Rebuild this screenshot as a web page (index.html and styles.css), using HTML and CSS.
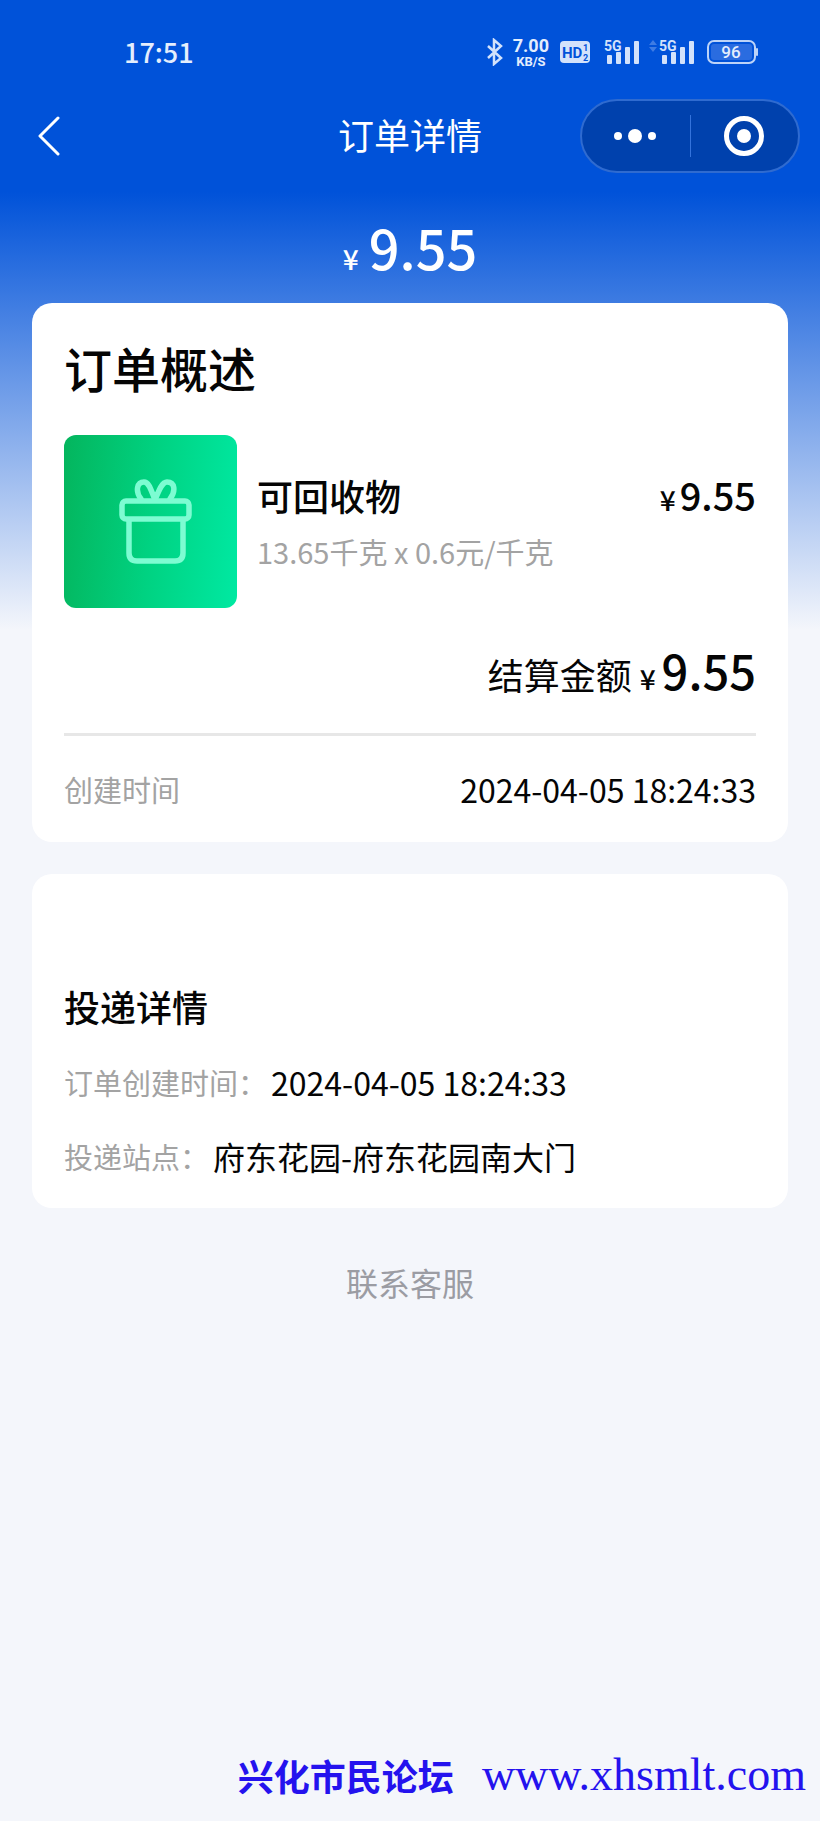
FILE: index.html
```html
<!DOCTYPE html>
<html lang="zh-CN">
<head>
<meta charset="utf-8">
<meta name="viewport" content="width=device-width">
<title>订单详情</title>
<link rel="stylesheet" href="styles.css">
</head>
<body>
<div class="page">
  <div class="status">
    <time class="clock">17:51</time>
    <div class="status-icons">
      <svg width="18" height="28" viewBox="0 0 18 28" fill="none" stroke="#d3e2fb" stroke-width="2.500"><path d="M2 8l13 12-7 6V2l7 6L2 20"/></svg>
      <div class="speed"><span class="speed-value">7.00</span><span class="speed-unit">KB/S</span></div>
      <svg class="hd" width="32" height="24" viewBox="0 0 32 24"><rect x="1" y="1" width="30" height="22" rx="4" fill="#d3e2fb"/><g fill="#0052d9" font-weight="700"><text x="3" y="18" font-size="15">HD</text><text x="24" y="11" font-size="9">1</text><text x="24" y="21" font-size="9">2</text></g></svg>
      <svg class="signal" width="36" height="28" viewBox="0 0 36 28" fill="#d3e2fb"><text x="0" y="13" font-size="14" font-weight="700">5G</text><rect x="3" y="17" width="5" height="9" rx="1"/><rect x="12" y="14" width="5" height="12" rx="1"/><rect x="21" y="9" width="5" height="17" rx="1"/><rect x="30" y="3" width="5" height="23" rx="1"/></svg>
      <svg class="signal second" width="46" height="28" viewBox="0 0 46 28" fill="#d3e2fb"><path d="M0 7l4-5 4 5zM0 9h8l-4 5z" fill="#3f7ce3"/><text x="10" y="13" font-size="14" font-weight="700">5G</text><rect x="13" y="17" width="5" height="9" rx="1"/><rect x="22" y="14" width="5" height="12" rx="1"/><rect x="31" y="9" width="5" height="17" rx="1"/><rect x="40" y="3" width="5" height="23" rx="1"/></svg>
      <svg class="battery" width="52" height="26" viewBox="0 0 52 26"><rect x="1" y="2" width="47" height="22" rx="6" fill="none" stroke="#bcd3f8" stroke-width="2"/><rect x="4" y="5" width="41" height="16" rx="3" fill="#2a6ce0"/><rect x="49" y="9" width="2" height="8" rx="1" fill="#bcd3f8"/><text x="24" y="19" font-size="17" font-weight="500" fill="#e4eefd" text-anchor="middle">96</text></svg>
    </div>
  </div>
  <header class="nav">
    <button class="back" aria-label="返回"><svg width="24" height="40" viewBox="0 0 24 40" fill="none" stroke="#fff" stroke-width="3" stroke-linecap="round" stroke-linejoin="round"><path d="M20 2L2 20l18 18"/></svg></button>
    <h1 class="nav-title">订单详情</h1>
    <div class="capsule">
      <button class="capsule-button" aria-label="更多"><svg width="44" height="16" viewBox="0 0 44 16" fill="#fff"><circle cx="4" cy="8" r="4"/><circle cx="21" cy="8" r="7"/><circle cx="38" cy="8" r="4"/></svg></button>
      <button class="capsule-button divided" aria-label="关闭"><svg width="42" height="42" viewBox="0 0 42 42"><circle cx="21" cy="21" r="17.5" fill="none" stroke="#fff" stroke-width="5"/><circle cx="21" cy="21" r="7" fill="#fff"/></svg></button>
    </div>
  </header>
  <p class="total"><span class="yen">¥</span>9.55</p>
  <main class="cards">
    <section class="card">
      <h2 class="card-title">订单概述</h2>
      <div class="item">
        <div class="thumb"><svg width="76" height="88" viewBox="0 0 76 88" fill="none" stroke="#7dfcd2" stroke-width="5.500" stroke-linejoin="round" stroke-linecap="round"><rect x="5" y="23" width="67" height="18" rx="4"/><path d="M12 42v33q0 8 8 8h38q8 0 8-8V42M24 21c-6-8-4-17 3-17 5 0 7 8 11 18 4-10 7-18 12-18 8 0 9 9 3 17"/></svg></div>
        <div class="item-text">
          <h3 class="item-name">可回收物</h3>
          <p class="item-sub">13.65千克 x 0.6元/千克</p>
        </div>
        <p class="item-price"><span class="yen">¥</span>9.55</p>
      </div>
      <p class="settle"><span class="settle-label">结算金额</span><span class="yen">¥</span>9.55</p>
      <dl class="created"><dt>创建时间</dt><dd>2024-04-05 18:24:33</dd></dl>
    </section>
    <section class="card delivery">
      <h2 class="section-title">投递详情</h2>
      <dl class="rows">
        <div class="row"><dt>订单创建时间：</dt><dd>2024-04-05 18:24:33</dd></div>
        <div class="row"><dt>投递站点：</dt><dd>府东花园-府东花园南大门</dd></div>
      </dl>
    </section>
  </main>
  <button class="contact">联系客服</button>
  <footer class="watermark"><span>兴化市民论坛</span><span class="site">www.xhsmlt.com</span></footer>
</div>
</body>
</html>
```

FILE: styles.css
```css
* { box-sizing: border-box; }
body, h1, h2, h3, p, dl, dd { margin: 0; }
body {
  font-family: "Noto Sans CJK SC", "Noto Sans", sans-serif;
  color: #050505;
  background: #f4f6fb;
}
button { padding: 0; border: 0; background: none; font: inherit; color: inherit; }
svg { display: block; flex: none; }
.page {
  display: flex;
  flex-direction: column;
  min-height: 100vh;
  background: linear-gradient(#0052d9 0, #0052d9 192px, #f4f6fb 630px);
}
.status {
  display: flex;
  justify-content: space-between;
  align-items: center;
  height: 92px;
  padding: 12px 61px 0 124px;
  color: #e4eefd;
}
.clock { font-size: 27px; font-weight: 500; line-height: 32px; }
.status-icons { display: flex; align-items: center; font-family: Roboto, sans-serif; }
.speed {
  display: flex;
  flex-direction: column;
  align-items: center;
  margin: 0 10px 0 9px;
  font-weight: 700;
}
.speed-value { font-size: 18px; line-height: 18px; }
.speed-unit { font-size: 13px; line-height: 13px; }
.signal { margin-left: 13px; }
.signal.second { margin-left: 9px; }
.battery { margin-left: 12px; }
.nav {
  display: grid;
  grid-template-columns: 1fr auto 1fr;
  align-items: center;
  height: 88px;
  padding: 0 20px 0 38px;
  color: #fff;
}
.back { justify-self: start; }
.nav-title { padding: 0 18px 4px 0; font-size: 36px; font-weight: 400; line-height: 48px; }
.capsule {
  display: flex;
  justify-self: end;
  width: 220px;
  height: 74px;
  padding: 14px 0;
  border: 2px solid #2f6bd0;
  border-radius: 37px;
  background: #0041ad;
}
.capsule-button { display: flex; flex: 1; justify-content: center; align-items: center; }
.divided { border-left: 1px solid #3473dc; }
.total {
  padding: 27px 0 5px;
  text-align: center;
  color: #fff;
  font-size: 54px;
  font-weight: 500;
  line-height: 80px;
}
.yen { margin-right: 6px; font-size: 28px; }
.total .yen { margin-right: 10px; }
.cards { display: flex; flex-direction: column; gap: 32px; padding: 0 32px; }
.card { padding: 32px; border-radius: 20px; background: #fff; }
.card-title { font-size: 48px; font-weight: 500; line-height: 64px; }
.item { display: flex; gap: 20px; margin-top: 36px; }
.thumb {
  display: flex;
  flex: none;
  width: 173px;
  height: 173px;
  padding: 43px 0 0 53px;
  border-radius: 12px;
  background: linear-gradient(95deg, #04b55d, #00d281 50%, #00e9a2);
}
.item-text { flex: 1; padding-top: 34px; }
.item-name { font-size: 36px; font-weight: 500; line-height: 52px; }
.item-sub { padding-top: 8px; font-size: 29px; line-height: 44px; color: #a3a3a3; }
.item-price { padding-top: 34px; font-size: 38px; font-weight: 500; line-height: 52px; }
.settle {
  padding: 22px 0 15px;
  border-bottom: 3px solid #e7e7e7;
  text-align: right;
  font-size: 47px;
  font-weight: 500;
  line-height: 80px;
}
.settle-label { margin-right: 8px; font-size: 36px; font-weight: 400; }
.item-price .yen { margin-right: 4px; }
.created { display: flex; justify-content: space-between; padding-top: 32px; font-size: 32px; line-height: 42px; }
dt { color: #a3a3a3; }
.created dt { font-size: 29px; }
.delivery { padding-top: 106px; padding-bottom: 28px; }
.section-title { font-size: 36px; font-weight: 500; line-height: 52px; }
.rows { display: flex; flex-direction: column; gap: 26px; padding-top: 26px; font-size: 32px; line-height: 48px; }
.row { display: flex; gap: 4px; }
.row dt { font-size: 29px; }
.contact { align-self: center; margin-top: 50px; font-size: 32px; line-height: 48px; color: #9b9ca3; }
.watermark {
  display: flex;
  justify-content: flex-end;
  align-items: center;
  gap: 28px;
  margin-top: auto;
  padding: 0 14px 14px 0;
  color: #2412ee;
  font-size: 36px;
  font-weight: 700;
  line-height: 64px;
}
.site { font-family: "Liberation Serif", serif; font-size: 46px; font-weight: 400; }
```
